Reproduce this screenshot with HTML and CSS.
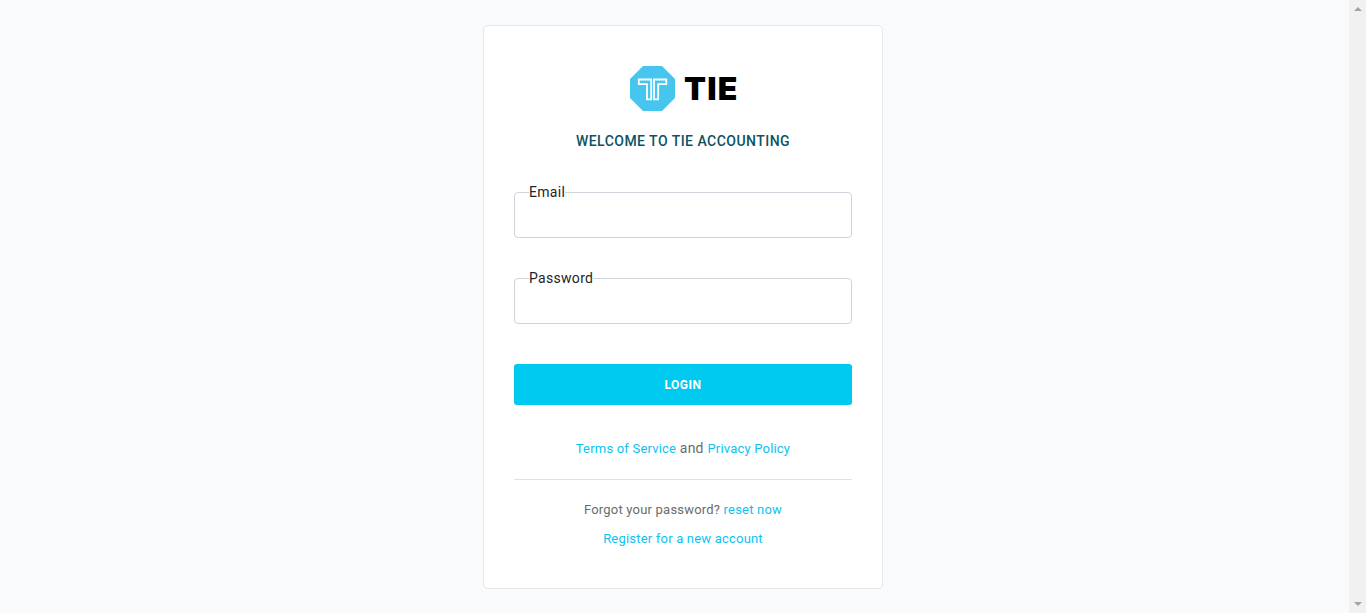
FILE: index.html
```html
<!DOCTYPE html>
<html lang="en">
<head>
<meta charset="utf-8">
<title>TIE Accounting</title>
<link rel="stylesheet" href="styles.css">
</head>
<body>
<main class="page">
  <section class="card">
    <div class="logo">
      <svg class="mark" viewBox="0 0 45 45" width="45" height="45">
        <path fill="#46c6ef" d="M13 0h19l13 13v19L32 45H13L0 32V13z"/>
        <path fill="none" stroke="#fff" stroke-width="1.8" d="M8.800 13.500H21.200V33.300H17V18.200H8.800zM36.300 13.500H24V33.300H28.200V18.200H36.300z"/>
      </svg>
      <span class="word">TIE</span>
    </div>
    <h1 class="title">WELCOME TO TIE ACCOUNTING</h1>
    <form class="form">
      <fieldset class="field"><legend class="label">Email</legend></fieldset>
      <fieldset class="field"><legend class="label">Password</legend></fieldset>
      <button class="login" type="button">LOGIN</button>
    </form>
    <p class="terms"><a class="link">Terms of Service</a> and <a class="link">Privacy Policy</a></p>
    <p class="forgot">Forgot your password? <a class="link">reset now</a></p>
    <p class="register"><a class="link">Register for a new account</a></p>
  </section>
</main>
<aside class="scrollbar"><i class="up"></i><i class="down"></i></aside>
</body>
</html>
```
FILE: styles.css
```css
*{box-sizing:border-box}
body{margin:0;height:613px;display:flex;background:#f9fafc;font-family:Roboto,sans-serif;overflow:hidden}
.page{flex:1;padding:25px 0 0 17px;display:flex;justify-content:center;align-items:flex-start}
.card{width:400px;height:564px;background:#fff;border:1px solid #e4e7ea;border-radius:5px;padding:40px 30px 0}
.logo{display:flex;justify-content:center;align-items:center;gap:9px;height:45px}
.word{width:53px;padding-left:.5px;font:900 32px/45px Inter,sans-serif;letter-spacing:1.2px;color:#000;white-space:nowrap}
.title{margin:20px 0 0;font-size:14px;line-height:20px;font-weight:500;letter-spacing:.47px;text-align:center;color:#0b5363}
.form{margin:33px 0 0}
.field{height:54px;margin:0 0 32px;padding:0 14px;border:1px solid #ced4da;border-radius:4px}
.label{padding:0;font-size:14px;line-height:17px;letter-spacing:.3px;color:#212529}
.login{display:block;width:100%;height:41px;margin-top:40px;border:0;border-radius:3px;background:#00c9f0;color:#fff;font:700 12px Roboto,sans-serif;letter-spacing:.5px}
.terms,.forgot,.register{margin:0;text-align:center;font-size:14px;letter-spacing:.2px;color:#6b6b6b}
.terms{height:75px;padding-top:33px;line-height:20px;border-bottom:1px solid #dee2e6}
.forgot{margin-top:20px;font-size:13px;line-height:20px}
.register{margin-top:8px;line-height:20px}
.link{font-size:13px;color:#0cc2f0}
.scrollbar{width:17px;height:613px;background:#f1f1f1;display:flex;flex-direction:column;justify-content:space-between;align-items:center;padding:7px 0}
.up,.down{border:4px solid transparent}
.up{border-top:0;border-bottom:4px solid #a3a3a3}
.down{border-bottom:0;border-top:4px solid #a3a3a3}
```
